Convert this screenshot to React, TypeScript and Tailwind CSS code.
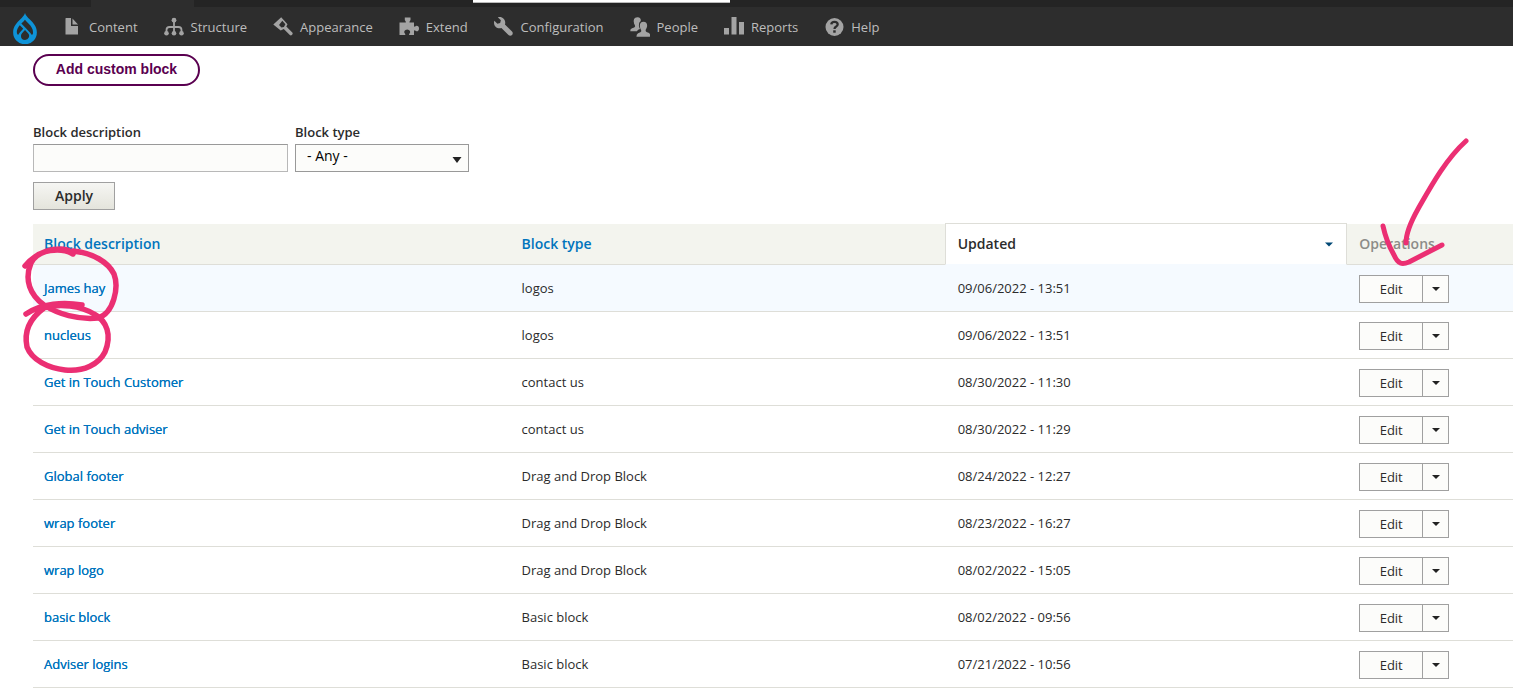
import React from "react";

type IconProps = { children: React.ReactNode };

function Icon({ children }: IconProps) {
  return (
    <svg viewBox="0 0 20 20" className="h-5 w-5 shrink-0 fill-[#a3a3a3]" aria-hidden="true">
      {children}
    </svg>
  );
}

const menu: { label: string; icon: React.ReactNode }[] = [
  {
    label: "Content",
    icon: (
      <path d="M4 1h5v8h7v8.500H3.500V1.500Q3.500 1 4 1zM10.500 1.500 16 7.500h-5.500z" />
    ),
  },
  {
    label: "Structure",
    icon: (
      <>
        <circle cx="10" cy="3.200" r="2.400" />
        <circle cx="2.500" cy="16.300" r="2.300" />
        <circle cx="10" cy="16.300" r="2.300" />
        <circle cx="17.500" cy="16.300" r="2.300" />
        <path d="M10 3v13M2.500 16v-3q0-3 3-3h9q3 0 3 3v3" fill="none" stroke="#a3a3a3" strokeWidth="1.800" />
      </>
    ),
  },
  {
    label: "Appearance",
    icon: (
      <path
        fillRule="evenodd"
        d="M8.200.3 14.500 7.200 13.300 9.600 19.300 15.600q.9 1-.2 2.200-1.200 1.100-2.300.2L10.800 12 7.700 13.400.3 7.500zM9.300 3.800 12.400 7.200 10.900 9.900 8.500 10.600 6 8z"
      />
    ),
  },
  {
    label: "Extend",
    icon: (
      <path d="M.5 5.500h6q.7-.1.200-.9l-.9-1.500V.500h5.700v2.600l-.9 1.500q-.5.800.2.900h4.200v3.600q.2.900 1.100.4l1.300-.8q2.600-.1 2.600 2.800t-2.600 2.800l-1.300-.8q-.9-.5-1.100.4V18h-4.600q-.7-.4-.2-1.100 1.500-1.200.8-2.800-.8-1.500-2.800-1.500t-2.800 1.500q-.7 1.600.8 2.800.5.700-.2 1.100H.5z" />
    ),
  },
  {
    label: "Configuration",
    icon: (
      <path
        transform="scale(1.25)"
        d="M14.416 11.586l-.01-.008v-.001l-5.656-5.656c.15-.449.252-.921.252-1.421 0-2.485-2.016-4.500-4.502-4.500-.505 0-.981.102-1.434.255l2.431 2.431-.588 2.196-2.196.588-2.445-2.445c-.162.464-.268.956-.268 1.475 0 2.486 2.014 4.500 4.500 4.500.5 0 .972-.102 1.421-.251l5.667 5.665c.781.781 2.047.781 2.828 0s.781-2.047 0-2.828z"
      />
    ),
  },
  {
    label: "People",
    icon: (
      <>
        <path d="M7.300.3Q11 .1 10.800 4 8.600 5.200 8.900 8.500q.1 1.700 1.100 3.500-2.200.6-3.100 2.300H.3q-.3-2.300 1.800-3 2.700-.6 3-1.800.1-1.200-1-2.800Q2.400.6 7.300.3z" />
        <path d="M13.500 4.700q3.900.2 3.600 4.500-.3 2-1.300 3.300-.6 1.900.7 2.400 3.600.9 3.500 2.500.1 1.400-.1 2.300H6.500q-.2-2.600 1.600-3.500 3-.8 3.200-1.900.1-1-.9-2.500-2-6.700 3.100-7.100z" />
      </>
    ),
  },
  {
    label: "Reports",
    icon: <path d="M0 11h5v6.500H0zM7.500 0h5v17.500h-5zM15 5h5v12.500h-5z" />,
  },
  {
    label: "Help",
    icon: (
      <>
        <circle cx="10.500" cy="10" r="9" />
        <path d="M7.300 7.300Q7.500 4.800 10.500 4.800t3.200 2.500q0 1.400-1.600 2.300-1.600.8-1.600 2.400" fill="none" stroke="#2d2d2d" strokeWidth="2.300" />
        <path d="M9.200 13.300h2.500v2.400H9.200z" fill="#2d2d2d" />
      </>
    ),
  },
];

const rows = [
  ["James hay", "logos", "09/06/2022 - 13:51"],
  ["nucleus", "logos", "09/06/2022 - 13:51"],
  ["Get in Touch Customer", "contact us", "08/30/2022 - 11:30"],
  ["Get in Touch adviser", "contact us", "08/30/2022 - 11:29"],
  ["Global footer", "Drag and Drop Block", "08/24/2022 - 12:27"],
  ["wrap footer", "Drag and Drop Block", "08/23/2022 - 16:27"],
  ["wrap logo", "Drag and Drop Block", "08/02/2022 - 15:05"],
  ["basic block", "Basic block", "08/02/2022 - 09:56"],
  ["Adviser logins", "Basic block", "07/21/2022 - 10:56"],
];

function Toolbar() {
  return (
    <header className="relative bg-[#2d2d2d]">
      <div className="h-[7px] bg-[#242424] pl-[91px]">
        <div className="h-full w-[103px] bg-[#2d2d2d]" />
      </div>
      <div className="absolute top-0 left-[473px] h-[3px] w-[257px] border-b border-[#bbb] bg-white" />
      <nav className="flex h-[39px] items-center pl-[13px]" aria-label="Administration">
        <a href="#home" aria-label="Home" className="mt-1 mr-[25px] shrink-0">
          <svg viewBox="0 0 42.150 55.080" className="h-[31px] w-6" aria-hidden="true">
            <path
              fill="#0e93d8"
              fillRule="evenodd"
              d="M29.750 11.730C25.870 7.860 22.180 4.160 21.080 0 20 4.160 16.280 7.860 12.400 11.730 6.590 17.540 0 24.120 0 34a21.080 21.080 0 1 0 42.150 0C42.150 24.120 35.560 17.540 29.750 11.730zM10.840 35.920a14.130 14.130 0 0 0-1.650 2.620.54.54 0 0 1-.36.300h-.18c-.47 0-1-.92-1-.92-.14-.22-.27-.45-.400-.69l-.09-.19C5.940 34.250 7 30.280 7 30.280a17.420 17.420 0 0 1 2.520-5.410 31.530 31.530 0 0 1 2.280-3l1 1 4.720 4.820a.54.54 0 0 1 0 .72l-4.930 5.470zM21.180 48.050a7.250 7.250 0 0 1-7.230-7.250 7.020 7.020 0 0 1 1.810-4.660c1.080-1.320 2.240-2.520 3.520-3.990l1.880-2.150 5.300 5.900a7.250 7.250 0 0 1-5.280 12.150zM35 37.470a2 2 0 0 1-1.700 1.350 1.500 1.500 0 0 1-.8-.7c-1.300-2.150-3-4.100-4.800-5.900l-4.100-4.200L15 19.200a.6.6 0 0 1 0-.8c2-2.100 4-4.100 6-6.600 2 2.600 4.200 4.700 6.200 6.800 5 5.100 8.100 9.400 8.100 15.300 0 1.200 0 2.400-.3 3.570z"
            />
          </svg>
        </a>
        <ul className="flex items-center gap-[26px]">
          {menu.map((item) => (
            <li key={item.label}>
              <a href={"#" + item.label.toLowerCase()} className="flex items-center gap-[7px] text-[13px] leading-5 text-[#bdbdbd]">
                <Icon>{item.icon}</Icon>
                {item.label}
              </a>
            </li>
          ))}
        </ul>
      </nav>
    </header>
  );
}

function Caret({ className }: { className: string }) {
  return (
    <svg viewBox="0 0 8 4" className={className} aria-hidden="true">
      <path d="M0 0h8L4 4z" />
    </svg>
  );
}

function Filters() {
  return (
    <form className="mt-[37px]" onSubmit={(e) => e.preventDefault()}>
      <div className="flex gap-[7px]">
        <div>
          <label htmlFor="description" className="block pb-0.5 text-[13px] leading-[19px] font-semibold">
            Block description
          </label>
          <input
            id="description"
            type="text"
            className="block h-7 w-[255px] border border-[#b8b8b8] border-t-[#999] bg-[#fcfcfa] px-2 text-sm"
          />
        </div>
        <div>
          <label htmlFor="type" className="block pb-0.5 text-[13px] leading-[19px] font-semibold">
            Block type
          </label>
          <div className="relative">
            <select
              id="type"
              className="block h-7 w-[174px] appearance-none border border-[#999] bg-[#fcfcfa] pb-1 pl-[11px] text-sm leading-5 text-black"
            >
              <option>- Any -</option>
            </select>
            <svg viewBox="0 0 10 6" className="pointer-events-none absolute top-[13px] right-[7px] h-[6px] w-[10px] fill-[#222]" aria-hidden="true">
              <path d="M.5 0h9L5 6z" />
            </svg>
          </div>
        </div>
      </div>
      <button
        type="submit"
        className="mt-[10px] block h-7 w-[82px] border border-[#a0a0a0] bg-linear-to-b from-[#f6f6f3] to-[#e4e4dc] text-sm leading-6 font-semibold"
      >
        Apply
      </button>
    </form>
  );
}

function BlockTable() {
  return (
    <table className="mt-[13px] w-full table-fixed border-separate border-spacing-0 text-left text-[13px] leading-5">
      <colgroup>
        <col className="w-[32.200%]" />
        <col className="w-[29.400%]" />
        <col className="w-[27.200%]" />
        <col />
      </colgroup>
      <thead className="text-sm leading-5">
        <tr className="h-[42px]">
          <th className="border-t border-b border-t-white border-b-[#deded8] bg-[#f3f4ee] bg-clip-padding pl-[11px] font-semibold">
            <a href="#sort-description" className="text-[#0074bd]">Block description</a>
          </th>
          <th className="border-t border-b border-t-white border-b-[#deded8] bg-[#f3f4ee] bg-clip-padding pl-3 font-semibold">
            <a href="#sort-type" className="text-[#0074bd]">Block type</a>
          </th>
          <th className="border border-[#deded8] border-b-[#f5faff] bg-white pr-[13px] pl-3 font-semibold" aria-sort="descending">
            <a href="#sort-updated" className="flex items-center justify-between">
              Updated
              <Caret className="h-[5px] w-2 fill-[#004875]" />
            </a>
          </th>
          <th className="border-t border-b border-t-white border-b-[#deded8] bg-[#f3f4ee] bg-clip-padding pl-3 font-semibold text-[#8c8c88]">
            Operations
          </th>
        </tr>
      </thead>
      <tbody>
        {rows.map(([name, type, updated], i) => (
          <tr key={name} className={i === 0 ? "h-[47px] bg-[#f5faff]" : "h-[47px]"}>
            <td className="border-b border-[#deded8] pl-[11px]">
              <a href="#block" className="text-[#0074bd] [text-shadow:0_0_0_currentColor]">{name}</a>
            </td>
            <td className="border-b border-[#deded8] pl-3">{type}</td>
            <td className="border-b border-[#deded8] pl-[13px]">{updated}</td>
            <td className="border-b border-[#deded8] pt-px pl-3">
              <div className="flex h-7 w-[90px] border border-[#a0a0a0] bg-[#fcfcfa]">
                <button type="button" className="grow text-[13px]">Edit</button>
                <button type="button" aria-label={"More actions for " + name} className="flex w-[26px] items-center justify-center border-l border-[#a0a0a0]">
                  <Caret className="h-1 w-2 fill-[#222]" />
                </button>
              </div>
            </td>
          </tr>
        ))}
      </tbody>
    </table>
  );
}

function Annotations() {
  return (
    <>
      <svg viewBox="0 0 110 140" className="pointer-events-none absolute top-[240px] left-[15px] h-[140px] w-[110px]" fill="none" stroke="#eb2f73" strokeWidth="5.500" strokeLinecap="round" strokeLinejoin="round" aria-hidden="true">
        <path d="M10 26C20 14 33 9 46 9q8 0 12 5C46 7 23 9 16 23 9 40 15 55 29 65c14 9 34 15 54 13C99 73 104 47 99 34 93 22 78 13 58 11" />
        <path d="M11 74C27 63 49 62 67 65M29 68C14 79 9 93 12 107c5 13 21 21 38 23 19 2 34-6 40-18 7-17 2-31-11-38C66 66 45 63 29 68" />
      </svg>
      <svg viewBox="0 0 100 140" className="pointer-events-none absolute top-[130px] left-[1375px] h-[140px] w-[100px]" fill="none" stroke="#eb2f73" strokeWidth="5" strokeLinecap="round" strokeLinejoin="round" aria-hidden="true">
        <path d="M91 11C70 30 55 58 43 79 34 95 31 105 31 113M8 96c3 14 7 22 11 29 4 9 8 10 15 7L67 115" />
      </svg>
    </>
  );
}

export default function App() {
  return (
    <div className="relative min-h-screen overflow-x-hidden bg-white font-['Open_Sans','Noto_Sans',sans-serif] text-[#2b2b2b]">
      <Toolbar />
      <main className="pt-2 pl-[33px]">
        <a
          href="#add"
          className="flex h-8 w-[167px] items-center justify-center rounded-full border-2 border-[#5a0050] pb-0.5 font-['Liberation_Sans',Arial,sans-serif] text-sm leading-5 font-bold text-[#5a0050]"
        >
          Add custom block
        </a>
        <Filters />
        <BlockTable />
      </main>
      <Annotations />
    </div>
  );
}
